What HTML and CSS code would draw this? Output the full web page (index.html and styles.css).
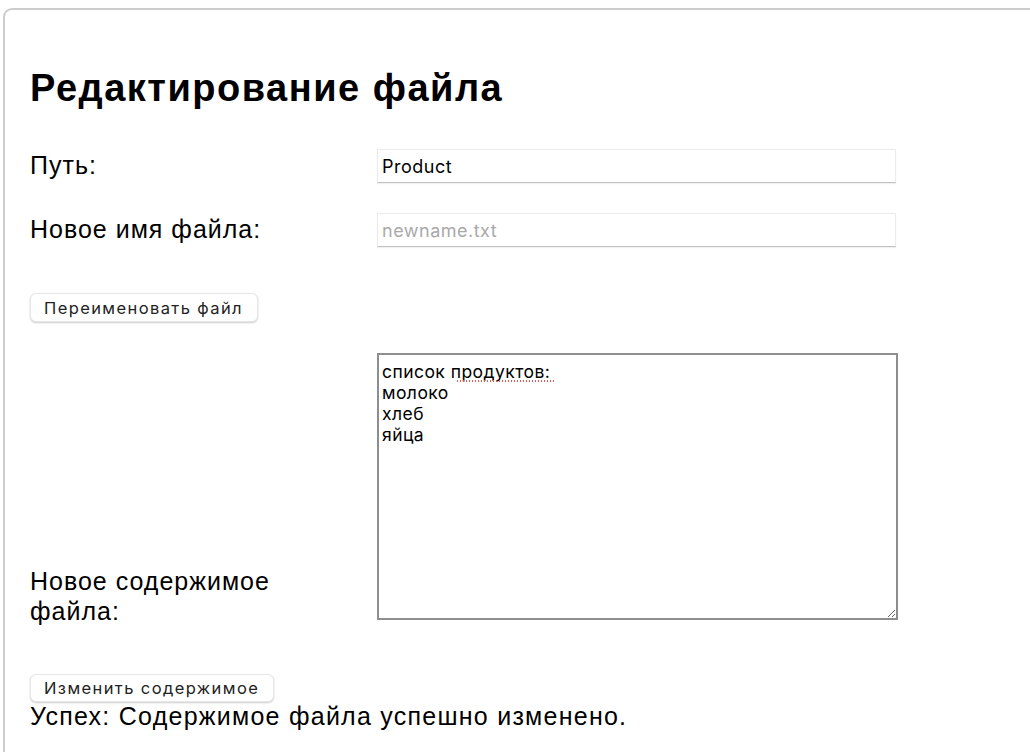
FILE: index.html
```html
<!DOCTYPE html>
<html lang="ru">
<head>
<meta charset="utf-8">
<title>Редактирование файла</title>
<link rel="stylesheet" href="styles.css">
</head>
<body>
<div class="card">
  <h1 class="title">Редактирование файла</h1>
  <form class="form">
    <div class="row">
      <label class="label" for="path">Путь:</label>
      <input class="field" id="path" type="text" value="Product">
    </div>
    <div class="row">
      <label class="label" for="newname">Новое имя файла:</label>
      <input class="field" id="newname" type="text" placeholder="newname.txt">
    </div>
    <div class="btn-row">
      <button class="btn" type="button">Переименовать файл</button>
    </div>
    <div class="row row-area">
      <label class="label label-area" for="content">Новое содержимое файла:</label>
      <div class="area-wrap">
        <textarea class="area" id="content" spellcheck="false">список продуктов:
молоко
хлеб
яйца</textarea>
        <span class="spell" aria-hidden="true"></span>
      </div>
    </div>
    <div class="btn-row btn-row-2">
      <button class="btn" type="button">Изменить содержимое</button>
    </div>
    <p class="status">Успех: Содержимое файла успешно изменено.</p>
  </form>
</div>
</body>
</html>
```
FILE: styles.css
```css
html, body {
  margin: 0;
  padding: 0;
  background: #fff;
}
body {
  font-family: "Liberation Sans", Arial, sans-serif;
  color: #000;
}
.card {
  margin: 8px 0 0 3px;
  border: 2px solid #cdcdcd;
  border-right: none;
  border-bottom: none;
  border-top-left-radius: 9px;
  padding: 56px 0 40px 25px;
  min-height: 760px;
  box-sizing: border-box;
}
.title {
  margin: 0 0 39px 0;
  font-size: 38px;
  letter-spacing: 1.5px;
  font-weight: bold;
  line-height: 44px;
}
.row {
  display: flex;
  align-items: center;
  margin-bottom: 30px;
}
.label {
  width: 347px;
  flex: none;
  font-size: 25px;
  letter-spacing: 1px;
  line-height: 28px;
  margin-top: -2px;
}
.field {
  width: 519px;
  height: 34px;
  box-sizing: border-box;
  border: 1px solid #ebebeb;
  border-bottom: 1px solid #c2c2c2;
  box-shadow: 0 1px 1px rgba(0,0,0,0.06);
  padding: 0 4px;
  font-family: Inter, "Noto Sans", sans-serif;
  font-size: 18px;
  letter-spacing: 0.5px;
  color: #000;
  outline: none;
}
.field::placeholder {
  color: #a9a9a9;
}
.btn-row {
  margin: 46px 0 31px 0;
}
.btn {
  height: 29px;
  padding: 0 14px 0 13px;
  background: #fff;
  border: 1px solid #e6e6e6;
  border-radius: 6px;
  box-shadow: 0 1px 2px rgba(0,0,0,0.2);
  font-family: Inter, "Noto Sans", sans-serif;
  font-size: 16.5px;
  letter-spacing: 1.4px;
  color: #222;
}
.row-area {
  align-items: flex-end;
  margin-bottom: 0;
}
.label-area {
  width: 300px;
  margin-right: 47px;
  margin-bottom: -6px;
  line-height: 30px;
}
.area-wrap {
  position: relative;
  display: flex;
}
.area {
  width: 521px;
  height: 267px;
  box-sizing: border-box;
  border: 2px solid #8e8e8e;
  padding: 6px 3px;
  font-family: Inter, "Noto Sans", sans-serif;
  font-size: 17.5px;
  letter-spacing: 0.45px;
  line-height: 21px;
  color: #000;
  resize: both;
  outline: none;
  margin: 0;
}
.spell {
  position: absolute;
  left: 79px;
  top: 27px;
  width: 100px;
  height: 2px;
  background-image: radial-gradient(circle, #e8584d 0.8px, transparent 1px);
  background-size: 3px 2px;
  background-repeat: repeat-x;
  pointer-events: none;
}
.btn-row-2 {
  margin: 54px 0 0 0;
}
.btn-row-2 .btn {
  height: 28px;
}
.status {
  margin: 0;
  font-size: 25px;
  letter-spacing: 1.25px;
  line-height: 28px;
}
```
